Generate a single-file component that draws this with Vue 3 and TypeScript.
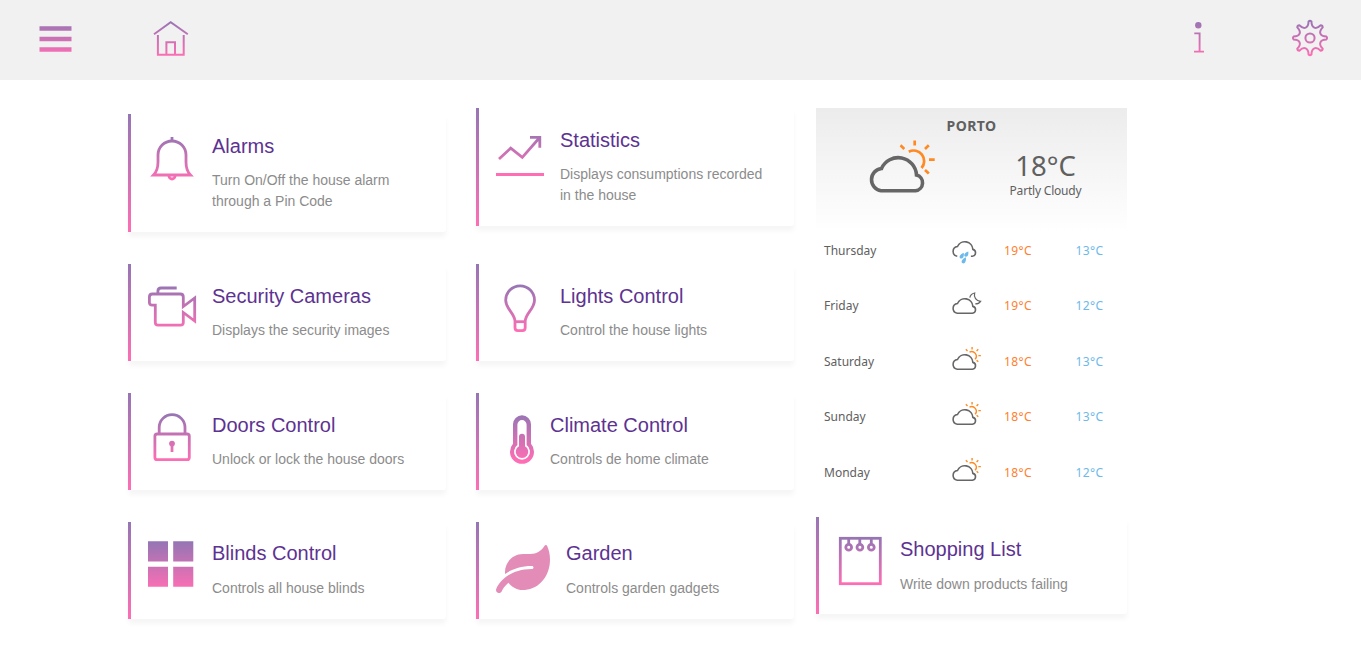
<script setup lang="ts">
interface Card {
  id: string
  title: string
  text: string
}

interface Forecast {
  day: string
  sky: 'rain' | 'moon' | 'sun'
  high: number
  low: number
}

const columns: Card[][] = [
  [
    { id: 'alarm', title: 'Alarms', text: 'Turn On/Off the house alarm through a Pin Code' },
    { id: 'camera', title: 'Security Cameras', text: 'Displays the security images' },
    { id: 'door', title: 'Doors Control', text: 'Unlock or lock the house doors' },
    { id: 'blinds', title: 'Blinds Control', text: 'Controls all house blinds' },
  ],
  [
    { id: 'stats', title: 'Statistics', text: 'Displays consumptions recorded in the house' },
    { id: 'light', title: 'Lights Control', text: 'Control the house lights' },
    { id: 'climate', title: 'Climate Control', text: 'Controls de home climate' },
    { id: 'garden', title: 'Garden', text: 'Controls garden gadgets' },
  ],
  [{ id: 'shopping', title: 'Shopping List', text: 'Write down products failing' }],
]

const forecast: Forecast[] = [
  { day: 'Thursday', sky: 'rain', high: 19, low: 13 },
  { day: 'Friday', sky: 'moon', high: 19, low: 12 },
  { day: 'Saturday', sky: 'sun', high: 18, low: 13 },
  { day: 'Sunday', sky: 'sun', high: 18, low: 13 },
  { day: 'Monday', sky: 'sun', high: 18, low: 12 },
]

const cloud = 'M12 50.700A11.200 11.200 0 0 1 12.500 28.500A18.300 18.300 0 0 1 47.500 35A8 8 0 0 1 46.500 50.700Z'

function polar(radius: number, degrees: number): string {
  const a = (degrees * Math.PI) / 180
  return `${(19 + radius * Math.cos(a)).toFixed(2)} ${(19 + radius * Math.sin(a)).toFixed(2)}`
}

function gearPath(): string {
  let d = `M${polar(16.6, -5)}`
  for (let a = 0; a < 360; a += 45) {
    d += `Q${polar(17.8, a)} ${polar(16.6, a + 5)}`
    d += `C${polar(10, a + 9)} ${polar(10, a + 36)} ${polar(16.6, a + 40)}`
  }
  return d + 'Z'
}

const gear = gearPath()
</script>

<template>
  <svg class="defs" width="0" height="0">
    <defs>
      <linearGradient id="fade" gradientUnits="userSpaceOnUse" x1="0" y1="0" x2="0" y2="48">
        <stop offset="0" stop-color="#9575b4" />
        <stop offset="1" stop-color="#ff6eb4" />
      </linearGradient>
      <linearGradient id="fade-bar" gradientUnits="userSpaceOnUse" x1="0" y1="0" x2="0" y2="37">
        <stop offset="0" stop-color="#9575b4" />
        <stop offset="1" stop-color="#ff6eb4" />
      </linearGradient>
    </defs>
  </svg>

  <header class="topbar">
    <svg class="menu" width="34" height="38" viewBox="0 0 34 38">
      <path d="M.5 8.500H32.500M.5 19H32.500M.5 29.500H32.500" stroke="url(#fade-bar)" stroke-width="4.600" fill="none" />
    </svg>
    <svg class="home" width="38" height="38" viewBox="0 0 38 38">
      <path
        d="M2 14.200L18.700 2.300L35.800 14.200M5.900 15V34.800H31.700V15M14.400 34.800V22.200H23V34.800"
        stroke="url(#fade-bar)" stroke-width="2" fill="none"
      />
    </svg>
    <svg class="info" width="14" height="38" viewBox="0 0 14 38">
      <circle cx="6.300" cy="5.200" r="3.200" fill="url(#fade-bar)" />
      <path d="M2.300 13.400H7.600V31.500M2 31.600H12" stroke="url(#fade-bar)" stroke-width="1.900" fill="none" />
    </svg>
    <svg class="gear" width="38" height="38" viewBox="0 0 38 38">
      <path :d="gear" stroke="url(#fade-bar)" stroke-width="2" stroke-linejoin="round" fill="none" />
      <circle cx="19" cy="19" r="4.600" stroke="url(#fade-bar)" stroke-width="2" fill="none" />
    </svg>
  </header>

  <main class="board">
    <section v-for="(cards, c) in columns" :key="c" class="column" :class="`column-${c + 1}`">
      <div v-if="c === 2" class="weather">
        <div class="city">PORTO</div>
        <div class="now">
          <svg class="now-icon" width="66" height="53" viewBox="0 0 66 53">
            <path :d="cloud" fill="none" stroke="#666" stroke-width="3.600" />
            <g fill="none" stroke="#ff8a22" stroke-width="2.700">
              <path d="M39.800 11.700A10.500 10.500 0 0 1 52.500 28" />
              <path d="M45.700 .5V5.500M31.500 5.300L35.300 8.900M59.800 5.300L56 8.900M60 19.700H65.700M56 30L59.800 33.600" />
            </g>
          </svg>
          <div class="reading">
            <div class="degrees">18°C</div>
            <div class="summary">Partly Cloudy</div>
          </div>
        </div>
        <div v-for="f in forecast" :key="f.day" class="day-row">
          <span class="day">{{ f.day }}</span>
          <svg class="sky" :class="`sky-${f.sky}`" width="29" height="23.300" viewBox="0 0 66 53">
            <template v-if="f.sky === 'rain'">
              <path
                d="M12 50.700A11.200 11.200 0 0 1 12.500 28.500A18.300 18.300 0 0 1 47.500 35A8 8 0 0 1 46.500 50.700H43"
                fill="none" stroke="#666" stroke-width="3.600"
              />
              <g fill="#6cb9ea">
                <path d="M37 40C38 46 36.500 51.500 31.500 51.500C25.500 51 26.500 44 37 40Z" />
                <path d="M26.500 42.500C28 50 26 56 21 56C14.500 55 16.500 47 26.500 42.500Z" />
                <path d="M31.500 53C32.500 60.500 30.500 67 25.500 67C19 66 21 57.500 31.500 53Z" />
              </g>
            </template>
            <template v-else>
              <path :d="cloud" fill="none" stroke="#666" stroke-width="3.600" />
              <path
                v-if="f.sky === 'moon'"
                d="M40.500 15C41.500 10 45.500 6 51.500 4.500C49 14.500 55 23 65 23.500C62.500 27.500 58.500 29.500 53 29.500"
                fill="none" stroke="#666" stroke-width="2.800"
              />
              <g v-else fill="none" stroke="#ff8a22" stroke-width="3.200">
                <path d="M39.800 11.700A10.500 10.500 0 0 1 52.500 28" />
                <path d="M45.700 0V5.500M31.500 5.300L35.300 8.900M59.800 5.300L56 8.900M60 19.700H65.700M56 30L59.800 33.600" />
              </g>
            </template>
          </svg>
          <span class="high">{{ f.high }}°C</span>
          <span class="low">{{ f.low }}°C</span>
        </div>
      </div>

      <article v-for="card in cards" :key="card.id" class="card" :class="`card-${card.id}`">
        <svg
          class="icon" :class="`icon-${card.id}`"
          :viewBox="card.id === 'garden' ? '0 0 576 512' : card.id === 'climate' ? '0 0 38 48' : '0 0 48 48'"
          fill="none" stroke="url(#fade)" stroke-width="2.800"
        >
          <template v-if="card.id === 'alarm'">
            <path d="M5.500 41C8.500 38 10 34 10 28V21A14 14 0 0 1 38 21V28C38 34 39.500 38 42.500 41Z" />
            <path d="M24 3V7" />
            <path d="M21 42A3 3 0 0 0 27 42" />
          </template>
          <template v-else-if="card.id === 'camera'">
            <path
              d="M35.300 13V22.500L46.700 14V37L35.300 28.500V38.500Q35.300 41.200 32.600 41.200H10Q7.300 41.200 7.300 38.500V21.200H4.200Q1.400 21.200 1.400 18.500V13Q1.400 10 4.400 10H32.300Q35.300 10 35.300 13Z"
            />
            <path d="M9.900 9.500V7.200Q9.900 4 13 4H28.700" />
          </template>
          <template v-else-if="card.id === 'door'">
            <rect x="6.900" y="21" width="34.400" height="25.600" rx="2.200" />
            <path d="M11.200 21V14.500A12.900 12.900 0 0 1 37 14.500V21" />
            <circle cx="24" cy="30.600" r="2.900" fill="url(#fade)" stroke="none" />
            <path d="M24 31V39" />
          </template>
          <g v-else-if="card.id === 'blinds'" fill="url(#fade)" stroke="none">
            <path d="M0 -.7H20V19.600H0ZM25.200 -.7H45.300V19.600H25.200ZM0 24.800H20V44.800H0ZM25.200 24.800H45.300V44.800H25.200Z" />
          </g>
          <template v-else-if="card.id === 'stats'">
            <path d="M3 31L14.700 20.200L26.300 29.400L43.700 9.500M34 9.300H43.800V19.700" />
            <path d="M0 46.400H48" stroke="#ff6eb4" stroke-width="3" />
          </template>
          <template v-else-if="card.id === 'light'">
            <path
              d="M19 37.500C19 29.500 9.700 25 9.700 16.200A14.400 14.400 0 0 1 38.500 16.200C38.500 25 29.200 29.500 29.200 37.500V43.800Q29.200 46.600 26.400 46.600H21.800Q19 46.600 19 43.800Z"
            />
            <path d="M19 37.700H29.200" />
          </template>
          <g v-else-if="card.id === 'climate'" stroke="none" fill="url(#fade)">
            <path d="M17 11.300A9 9 0 0 1 35 11.300V30.800A12 12 0 1 1 17 30.800Z" />
            <path fill="#fff" d="M21.400 11.700A4.600 4.600 0 0 1 30.600 11.700V32.100A8 8 0 1 1 21.400 32.100Z" />
            <path d="M23 23.700A3 3 0 0 1 29 23.700V33.200A6.300 6.300 0 1 1 23 33.200Z" />
          </g>
          <path
            v-else-if="card.id === 'garden'" fill="#e48cb8" stroke="none"
            d="M546.200 9.700c-5.600-12.500-21.600-13-28.300-1.200C486.900 62.400 431.400 96 368 96h-80C182 96 96 182 96 288c0 7 .8 13.700 1.500 20.500C161.300 262.800 253.400 224 384 224c8.800 0 16 7.200 16 16s-7.200 16-16 16C132.600 256 26 410.100 2.400 468c-6.600 16.300 1.200 34.900 17.500 41.600 16.400 6.800 35-1.100 41.800-17.300 1.500-3.600 20.900-47.900 71.900-90.600 32.400 43.900 94 85.800 174.900 77.200C465.500 467.500 576 326.700 576 154.300c0-50.200-10.800-102.200-29.800-144.600z"
          />
          <template v-else>
            <rect x="4.300" y="1.300" width="40" height="45.400" />
            <path d="M12.700 1V7M23.800 1V7M35.300 1V7" />
            <circle cx="12.700" cy="10.200" r="2.900" />
            <circle cx="23.900" cy="10.200" r="2.900" />
            <circle cx="35.300" cy="10.200" r="2.900" />
          </template>
        </svg>
        <div class="copy">
          <h2 class="title">{{ card.title }}</h2>
          <p class="text">{{ card.text }}</p>
        </div>
      </article>
    </section>
  </main>
</template>

<style>
body {
  background: #fff;
  font-family: "Liberation Sans", Arial, sans-serif;
}
</style>

<style scoped>
svg {
  display: block;
  flex: none;
  overflow: visible;
}

.defs {
  position: absolute;
}

.topbar {
  display: flex;
  box-sizing: border-box;
  height: 80px;
  padding: 20px 32px 0 39px;
  background: #f1f1f1;
}

.home {
  margin-left: 79px;
}

.info {
  margin-left: auto;
}

.gear {
  margin: -1px 0 0 85px;
}

.board {
  display: flex;
  align-items: flex-start;
  padding: 28px 0 28px 128px;
}

.column {
  display: flex;
  flex-direction: column;
  gap: 32px;
  width: 318px;
}

.column-1 {
  padding-top: 6px;
}

.column-2 {
  margin-left: 30px;
}

.column-2 .card:first-child {
  margin-bottom: 6px;
}

.column-3 {
  gap: 16px;
  width: 311px;
  margin-left: 22px;
}

.card {
  display: flex;
  align-items: flex-start;
  padding: 20px 24px 20px 17px;
  border-left: 3px solid;
  border-image: linear-gradient(#9575b4, #ff6eb4) 1;
  border-radius: 3px;
  box-shadow: 0 5px 5px rgba(0, 0, 0, 0.04);
}

.icon {
  width: 48px;
  height: 48px;
}

.icon-climate {
  width: 38px;
}

.icon-garden {
  width: 54px;
  margin-top: 3px;
}

.copy {
  margin-left: 16px;
}

.title {
  margin: 0;
  font-size: 20px;
  font-weight: 400;
  line-height: 24px;
  color: #5d3292;
}

.text {
  margin: 12px 0 0;
  font-size: 14px;
  line-height: 21px;
  color: #8c8c8c;
}

.card-blinds .title,
.card-garden .title {
  margin: -1px 0 13px;
}

.card-shopping .text {
  margin: 13px 0 -1px;
}

.weather {
  height: 393px;
  background: linear-gradient(#ececec, #fff) 0 0 / 100% 124px no-repeat;
  font-family: "Noto Sans", "DejaVu Sans", sans-serif;
  color: #606060;
}

.city {
  padding-top: 8px;
  font-size: 14px;
  font-weight: 700;
  line-height: 20px;
  letter-spacing: 0.400px;
  text-align: center;
}

.now {
  display: flex;
  height: 87px;
}

.now-icon {
  margin: 4px 0 0 53px;
}

.reading {
  width: 110px;
  margin: 12px 0 0 55.500px;
  text-align: center;
}

.degrees {
  font-size: 27.500px;
  line-height: 36px;
}

.summary {
  font-size: 12px;
  line-height: 14px;
  letter-spacing: -0.200px;
}

.day-row {
  display: grid;
  grid-template-columns: 128.500px 51.500px 71.500px 1fr;
  align-items: center;
  height: 55.500px;
  padding-left: 8px;
  font-size: 12px;
}

.day,
.high,
.low {
  margin-top: -0.700px;
}

.sky {
  margin: -7px 0 0 -0.500px;
}

.sky-rain {
  margin-top: -10px;
}

.high,
.low {
  letter-spacing: 0.400px;
}

.high {
  color: #ff8030;
}

.low {
  color: #6cb9ea;
}
</style>
